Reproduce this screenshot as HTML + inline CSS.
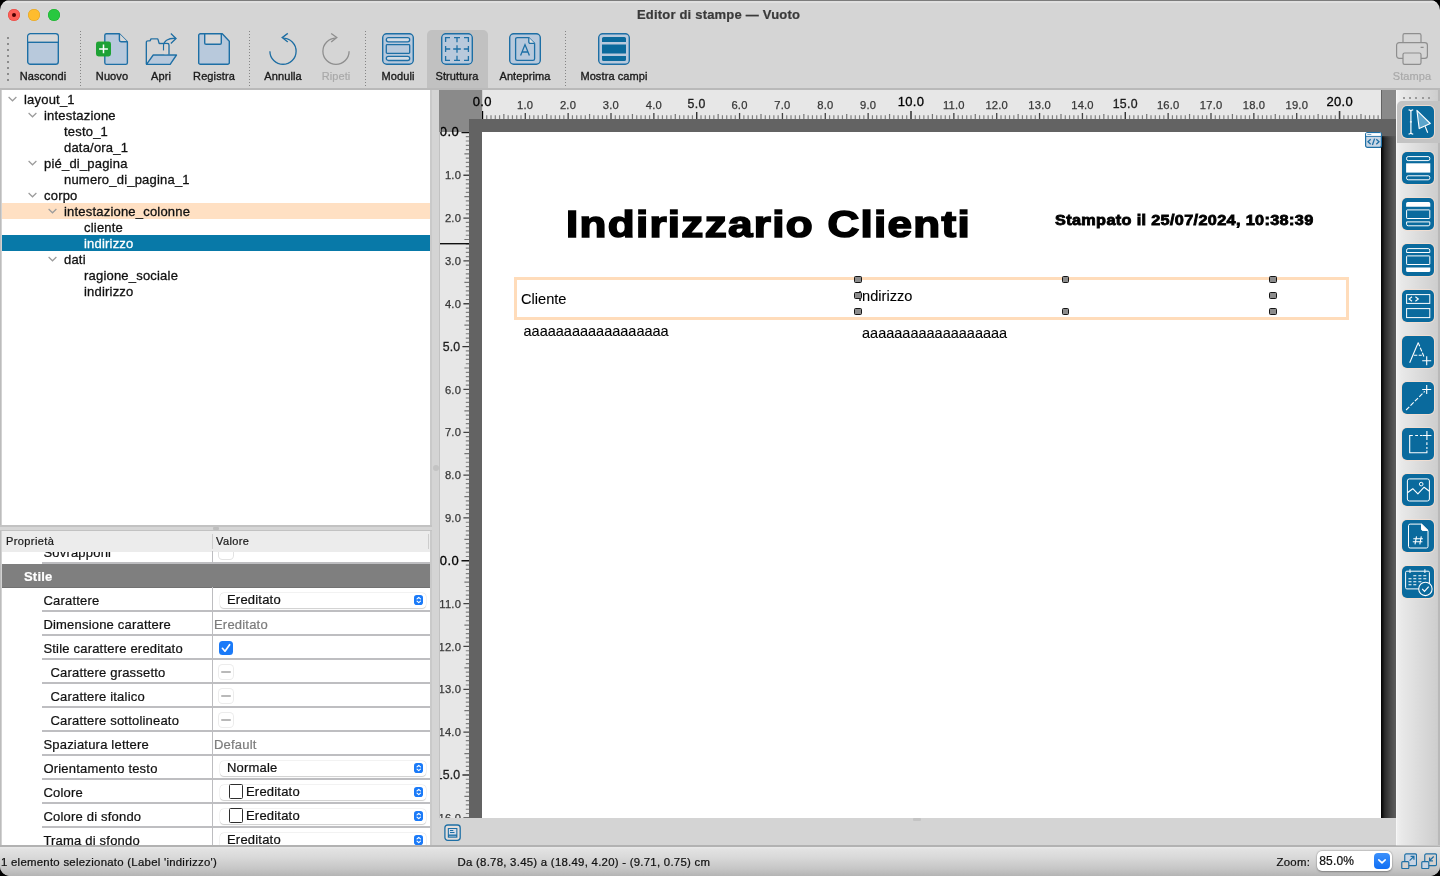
<!DOCTYPE html>
<html lang="it">
<head>
<meta charset="utf-8">
<title>Editor di stampe — Vuoto</title>
<style>
*{box-sizing:border-box;margin:0;padding:0}
html,body{width:1440px;height:876px;overflow:hidden;background:#000}
body{font-family:"Liberation Sans",sans-serif;font-size:13px;color:#1a1a1a;position:relative}
.a{position:absolute}
#win{position:absolute;left:0;top:0;width:1440px;height:876px;background:#d5d5d5;border-radius:10px;overflow:hidden;will-change:transform;-webkit-font-smoothing:antialiased;-webkit-text-stroke-width:.22px}
.t{position:absolute;white-space:nowrap;line-height:16px}
.tl{position:absolute;top:9px;width:12px;height:12px;border-radius:50%}
#title{left:518.500px;width:400px;top:6.800px;text-align:center;font-weight:bold;font-size:13px;color:#3a3a3a;letter-spacing:.2px}
.tbl{position:absolute;top:68.400px;width:100px;margin-left:-50px;text-align:center;font-size:11px;line-height:16px;color:#1a1a1a;white-space:nowrap;letter-spacing:.1px;-webkit-text-stroke-width:.34px}
.tbl.dis{color:#a9a9a9;-webkit-text-stroke-width:.2px}
.ico{position:absolute;top:33px;width:32px;height:32px;overflow:visible;filter:drop-shadow(0 0 .7px rgba(246,224,212,.95)) drop-shadow(0 0 .5px rgba(246,224,212,.8))}
.vsep{position:absolute;top:31px;width:1px;height:55px;background:repeating-linear-gradient(180deg,#858585 0,#858585 1px,transparent 1px,transparent 3px)}
/* tree */
#tree{left:2px;top:90px;width:428px;height:435px;background:#fff}
.tr{position:absolute;left:0;width:428px;height:16px;line-height:16px;font-size:13px;white-space:nowrap;color:#111;letter-spacing:.2px;-webkit-text-stroke-width:.3px}
.tr span{position:absolute;top:.8px}
.chev{position:absolute;top:5px;width:9px;height:6px}
/* props */
#props{left:2px;top:531px;width:428px;height:314px;background:#fff;overflow:hidden}
.pr{position:absolute;left:0;width:428px;height:24px}
.pr .n{position:absolute;top:4.700px;line-height:16px;font-size:13px;white-space:nowrap;color:#111;letter-spacing:.2px;margin-left:-.6px}
.pr .ln{position:absolute;left:40px;right:.5px;bottom:0;height:2px;background:#bebec1}
.pr .v{position:absolute;left:212px;top:4.500px;line-height:16px;font-size:13px;color:#7c7c7c;letter-spacing:.2px}
.cb{position:absolute;left:218px;top:588px;width:205.500px;height:14.500px;background:#fff;border-radius:4px;box-shadow:0 0 0 .5px rgba(0,0,0,.07),0 .5px 1px rgba(0,0,0,.16)}
.cb .x{position:absolute;left:7px;top:-1.300px;line-height:16px;font-size:13px;color:#111;white-space:nowrap;letter-spacing:.2px}
.cb .st{position:absolute;right:2.500px;top:2.200px;width:9.500px;height:10px;border-radius:2.800px;background:#1a7af8}
.sw{position:absolute;left:9px;top:-.7px;width:14px;height:14.400px;border:1.200px solid #2e2e2e;border-radius:1.500px;background:#fff}
.chk{position:absolute;left:217px;width:14px;height:14px;border-radius:3.5px}
/* rulers */
.hl{position:absolute;white-space:nowrap;text-align:center;width:40px;margin-left:-20px}
.hl.A{font-size:13px;color:#000;top:94.200px;line-height:16px;letter-spacing:.3px;-webkit-text-stroke-width:.3px}
.hl.B{font-size:12.300px;color:#1e1e1e;top:95.500px;line-height:16px;letter-spacing:.3px;-webkit-text-stroke-width:.3px}
.hl.C{font-size:11.200px;color:#383838;top:97px;line-height:16px;letter-spacing:.2px;-webkit-text-stroke-width:.25px}
.vl{position:absolute;white-space:nowrap;text-align:right;width:40px;left:420px;line-height:16px}
.vl.A{font-size:13px;color:#000;letter-spacing:.45px;-webkit-text-stroke-width:.3px}
.vl.B{font-size:12.300px;color:#1e1e1e;letter-spacing:.1px;-webkit-text-stroke-width:.3px}
.vl.C{font-size:11.200px;color:#383838;letter-spacing:.25px;-webkit-text-stroke-width:.25px}
.rb{position:absolute;left:1402px;width:32px;height:32px;border-radius:5px;background:#0a6a9d;box-shadow:0 0 0 1px rgba(245,222,208,.85)}
.rb svg{position:absolute;left:0;top:0;width:32px;height:32px;overflow:visible}
.pg{position:absolute;white-space:nowrap;color:#000;-webkit-text-stroke-width:.1px}
.hd{position:absolute;width:7.700px;height:7.400px;margin:.5px 0 0 .1px;background:#8c8c8c;border:1.800px solid #151515;border-radius:1.500px}
</style>
</head>
<body>
<div id="win">
<!-- title bar -->
<div class="a" style="left:0;top:0;width:1440px;height:1px;background:#7c7c7c"></div>
<div class="a" style="left:0;top:1px;width:1440px;height:1.500px;background:#e0e0e0"></div>
<div class="tl" style="left:8px;background:#fe5f57;box-shadow:0 0 0 .5px #e0443e inset"></div>
<div class="a" style="left:12px;top:13px;width:4px;height:4px;border-radius:50%;background:#4d0000"></div>
<div class="tl" style="left:28px;background:#febc2e;box-shadow:0 0 0 .5px #dea123 inset"></div>
<div class="tl" style="left:48px;background:#28c840;box-shadow:0 0 0 .5px #1aab29 inset"></div>
<div class="t" id="title">Editor di stampe — Vuoto</div>

<!-- toolbar grip -->
<div class="a" style="left:7px;top:37px;width:2px;height:45px;background:repeating-linear-gradient(180deg,#8c8c8c 0,#8c8c8c 2px,transparent 2px,transparent 6px)"></div>

<!-- selected bg for Struttura -->
<div class="a" style="left:427px;top:30px;width:61px;height:59px;background:#c1c1c1;border-radius:5px 5px 0 0"></div>

<!-- Nascondi -->
<svg class="ico" style="left:27px" viewBox="0 0 32 32"><rect x=".7" y=".7" width="30.6" height="30.6" rx="2.6" fill="#b8c9dc" stroke="#1d6fa5" stroke-width="1.4"/><path d="M1.4 3.3a1.9 1.9 0 0 1 1.9-1.9h25.4a1.9 1.9 0 0 1 1.9 1.9V9H1.4z" fill="#d8d8d8"/><path d="M.7 9.3h30.6" stroke="#1d6fa5" stroke-width="1.4"/></svg>
<div class="tbl" style="left:43px">Nascondi</div>
<div class="vsep" style="left:80px"></div>

<!-- Nuovo -->
<svg class="ico" style="left:95px" viewBox="0 0 32 32"><path d="M11.4.7h13l8 8v21.1a1.6 1.6 0 0 1-1.6 1.6H11.400a1.600 1.600 0 0 1-1.600-1.600V2.300A1.600 1.600 0 0 1 11.400.7z" fill="#b8c9dc" stroke="#1d6fa5" stroke-width="1.4" stroke-linejoin="round"/><path d="M24.4.7v6.400a1.600 1.600 0 0 0 1.600 1.600h6.400" fill="#d8d8d8" stroke="#1d6fa5" stroke-width="1.4" stroke-linejoin="round"/><rect x="1" y="8.400" width="15" height="15" rx="2.400" fill="#1ea235"/><path d="M8.500 11.500v8.800M4.100 15.900h8.800" stroke="#fff" stroke-width="1.500"/></svg>
<div class="tbl" style="left:112px">Nuovo</div>

<!-- Apri -->
<svg class="ico" style="left:145px" viewBox="0 0 32 32"><path d="M1.300 31V9.400a1.500 1.500 0 0 1 1.500-1.500h2.200l1-2h6.800l1.400 4.600h8.300a1.500 1.500 0 0 1 1.500 1.500v9.600" fill="none" stroke="#1d6fa5" stroke-width="1.400" stroke-linejoin="round"/><path d="M8.200 22h23.300l-6.300 9.400H1.500z" fill="#b8c9dc" stroke="#1d6fa5" stroke-width="1.400" stroke-linejoin="round"/><path d="M18.600 17.500v-4.500c0-5 4-7.800 11.600-7.700" fill="none" stroke="#1d6fa5" stroke-width="1.400"/><path d="M25.800.6l5.200 4.800-5.200 5" fill="none" stroke="#1d6fa5" stroke-width="1.400"/><path d="M19.300 11.200h3.200v10h-3.200z" fill="#d5d5d5"/></svg>
<div class="tbl" style="left:161px">Apri</div>

<!-- Registra -->
<svg class="ico" style="left:198px" viewBox="0 0 32 32"><path d="M2.300.7h22l7 7.600v21.400a1.600 1.600 0 0 1-1.600 1.600H2.300A1.600 1.600 0 0 1 .7 29.700V2.300A1.600 1.600 0 0 1 2.300.7z" fill="#b8c9dc" stroke="#1d6fa5" stroke-width="1.400" stroke-linejoin="round"/><path d="M6.700.7v9.200a1.400 1.400 0 0 0 1.400 1.400h13.800a1.400 1.400 0 0 0 1.400-1.400V.7z" fill="#d8d8d8" stroke="#1d6fa5" stroke-width="1.400" stroke-linejoin="round"/></svg>
<div class="tbl" style="left:214px">Registra</div>
<div class="vsep" style="left:249px"></div>

<!-- Annulla -->
<svg class="ico" style="left:267px" viewBox="0 0 32 32"><path d="M2.900 18.200a13.100 13.100 0 1 0 13.100-13.100" fill="none" stroke="#1d6fa5" stroke-width="1.400"/><path d="M20.800.4l-5.600 4.200 5.600 4.400" fill="none" stroke="#1d6fa5" stroke-width="1.400" stroke-linejoin="miter"/></svg>
<div class="tbl" style="left:283px">Annulla</div>

<!-- Ripeti -->
<svg class="ico" style="left:320px;filter:none" viewBox="0 0 32 32"><path d="M29.100 18.200a13.100 13.100 0 1 1-13.100-13.100" fill="none" stroke="#8e8e8e" stroke-width="1.300"/><path d="M11.200.4l5.600 4.200-5.600 4.400" fill="none" stroke="#8e8e8e" stroke-width="1.300"/></svg>
<div class="tbl dis" style="left:336px">Ripeti</div>
<div class="vsep" style="left:365px"></div>

<!-- Moduli -->
<svg class="ico" style="left:382px" viewBox="0 0 32 32"><rect x=".7" y=".7" width="30.600" height="30.600" rx="4" fill="#b8c9dc" stroke="#1d6fa5" stroke-width="1.400"/><rect x="4.300" y="4.600" width="23.400" height="4.200" rx="2.100" fill="#d3dbe4" stroke="#1d6fa5" stroke-width="1.300"/><rect x="4.300" y="11.600" width="23.400" height="8.800" rx=".8" fill="#b8c9dc" stroke="#1d6fa5" stroke-width="1.300"/><rect x="4.300" y="23.300" width="23.400" height="4.200" rx="2.100" fill="#d3dbe4" stroke="#1d6fa5" stroke-width="1.300"/></svg>
<div class="tbl" style="left:398px">Moduli</div>

<!-- Struttura -->
<svg class="ico" style="left:441px" viewBox="0 0 32 32"><rect x=".7" y=".7" width="30.600" height="30.600" rx="4" fill="#b8c9dc" stroke="#1d6fa5" stroke-width="1.400"/><path d="M4.600 9V4.600H9M13 4.600h6M23 4.600h4.400V9M27.400 13v6M27.400 23v4.400H23M19 27.400h-6M9 27.400H4.600V23M4.600 19v-6M16 4.600v4.600M16 27.400v-4.600M4.600 16h4.600M27.400 16h-4.600M16 12.200v7.600M12.200 16h7.600" fill="none" stroke="#1d6fa5" stroke-width="1.300"/></svg>
<div class="tbl" style="left:457px">Struttura</div>

<!-- Anteprima -->
<svg class="ico" style="left:509px" viewBox="0 0 32 32"><rect x=".7" y=".7" width="30.600" height="30.600" rx="4" fill="#b8c9dc" stroke="#1d6fa5" stroke-width="1.400"/><path d="M8.200 4.600h11.600l5.800 5.800v15.400a1.600 1.600 0 0 1-1.600 1.600H8.200a1.600 1.600 0 0 1-1.600-1.600V6.200a1.600 1.600 0 0 1 1.600-1.600z" fill="#b8c9dc" stroke="#1d6fa5" stroke-width="1.300" stroke-linejoin="round"/><path d="M19.800 4.600v4.400a1.400 1.400 0 0 0 1.400 1.400h4.400" fill="#e4e4e4" stroke="#1d6fa5" stroke-width="1.300" stroke-linejoin="round"/><path d="M11.600 22.400l4.400-10.800 4.400 10.800M13 19h6" fill="none" stroke="#1d6fa5" stroke-width="1.300"/></svg>
<div class="tbl" style="left:525px">Anteprima</div>
<div class="vsep" style="left:565px"></div>

<!-- Mostra campi -->
<svg class="ico" style="left:598px" viewBox="0 0 32 32"><rect x=".7" y=".7" width="30.600" height="30.600" rx="4" fill="#b8c9dc" stroke="#1d6fa5" stroke-width="1.400"/><path d="M5.600 4h20.800a1.600 1.600 0 0 1 1.600 1.600V9H4V5.600A1.600 1.600 0 0 1 5.600 4zM4 11.600h24v8.800H4zM4 23h24v3.400a1.600 1.600 0 0 1-1.600 1.600H5.600A1.600 1.600 0 0 1 4 26.400z" fill="#0b6a9c"/></svg>
<div class="tbl" style="left:614px">Mostra campi</div>

<!-- Stampa -->
<svg class="ico" style="left:1396px;filter:none" viewBox="0 0 32 32"><path d="M7 9.600V2.200A1.600 1.600 0 0 1 8.600.6h14.800A1.600 1.600 0 0 1 25 2.200v7.400" fill="none" stroke="#8e8e8e" stroke-width="1.200"/><path d="M7 25.400H3.200a2.600 2.600 0 0 1-2.600-2.600V12.200a2.600 2.600 0 0 1 2.600-2.600h25.600a2.600 2.600 0 0 1 2.600 2.600v10.600a2.600 2.600 0 0 1-2.600 2.600H25" fill="none" stroke="#8e8e8e" stroke-width="1.200"/><path d="M8.600 20h14.800a1.600 1.600 0 0 1 1.600 1.600v8.200a1.600 1.600 0 0 1-1.600 1.600H8.600A1.600 1.600 0 0 1 7 29.800v-8.200A1.600 1.600 0 0 1 8.600 20zM24.600 14.400h3" fill="none" stroke="#8e8e8e" stroke-width="1.200"/></svg>
<div class="tbl dis" style="left:1412px">Stampa</div>

<!-- toolbar bottom line -->
<div class="a" style="left:0;top:88px;width:1440px;height:2px;background:#b9b9b9"></div>
<!-- left edge line -->
<div class="a" style="left:0;top:90px;width:2px;height:756px;background:linear-gradient(90deg,#bcbcbc 0,#bcbcbc 70%,#d2d2d2 70%)"></div>
<div class="a" id="tree">
<div class="tr" style="top:1px;"><svg class="chev" style="left:5.5px" viewBox="0 0 9 6"><path d="M.6 1l3.900 3.800L8.400 1" fill="none" stroke="#9b9b9b" stroke-width="1.200"/></svg><span style="left:22px;">layout_1</span></div>
<div class="tr" style="top:17px;"><svg class="chev" style="left:25.5px" viewBox="0 0 9 6"><path d="M.6 1l3.900 3.800L8.400 1" fill="none" stroke="#9b9b9b" stroke-width="1.200"/></svg><span style="left:42px;">intestazione</span></div>
<div class="tr" style="top:33px;"><span style="left:62px;">testo_1</span></div>
<div class="tr" style="top:49px;"><span style="left:62px;">data/ora_1</span></div>
<div class="tr" style="top:65px;"><svg class="chev" style="left:25.5px" viewBox="0 0 9 6"><path d="M.6 1l3.900 3.800L8.400 1" fill="none" stroke="#9b9b9b" stroke-width="1.200"/></svg><span style="left:42px;">pié_di_pagina</span></div>
<div class="tr" style="top:81px;"><span style="left:62px;">numero_di_pagina_1</span></div>
<div class="tr" style="top:97px;"><svg class="chev" style="left:25.5px" viewBox="0 0 9 6"><path d="M.6 1l3.900 3.800L8.400 1" fill="none" stroke="#9b9b9b" stroke-width="1.200"/></svg><span style="left:42px;">corpo</span></div>
<div class="tr" style="top:113px;background:#ffe0c3;"><svg class="chev" style="left:45.5px" viewBox="0 0 9 6"><path d="M.6 1l3.900 3.800L8.400 1" fill="none" stroke="#9b9b9b" stroke-width="1.200"/></svg><span style="left:62px;">intestazione_colonne</span></div>
<div class="tr" style="top:129px;"><span style="left:82px;">cliente</span></div>
<div class="tr" style="top:145px;background:#0879a8;"><span style="left:82px;color:#fff;">indirizzo</span></div>
<div class="tr" style="top:161px;"><svg class="chev" style="left:45.5px" viewBox="0 0 9 6"><path d="M.6 1l3.900 3.800L8.400 1" fill="none" stroke="#9b9b9b" stroke-width="1.200"/></svg><span style="left:62px;">dati</span></div>
<div class="tr" style="top:177px;"><span style="left:82px;">ragione_sociale</span></div>
<div class="tr" style="top:193px;"><span style="left:82px;">indirizzo</span></div>
</div>
<!-- tree right edge -->
<div class="a" style="left:430px;top:90px;width:2px;height:756px;background:#c9c9c9"></div>
<!-- horizontal splitter -->
<div class="a" style="left:0;top:525px;width:432px;height:6px;background:#d6d6d6;border-top:2px solid #c2c2c2;border-bottom:1.5px solid #c2c2c2"></div>
<div class="a" style="left:213px;top:527px;width:6px;height:3px;background:#bdbdbd;border-radius:1px"></div>
<div class="a" id="props">
<div class="pr" style="top:9px"><span class="n" style="left:42px">Sovrapponi</span><div class="chk" style="top:5px;background:#fff;box-shadow:0 0 0 1px #e2e2e2"></div><div class="ln"></div></div>
<div class="a" style="left:0;top:0;width:428px;height:20.500px;background:#ececec"></div>
<div class="t" style="left:4px;top:2px;font-size:11px;color:#1a1a1a;letter-spacing:.4px">Proprietà</div>
<div class="t" style="left:214px;top:2px;font-size:11px;color:#1a1a1a;letter-spacing:.4px">Valore</div>
<div class="a" style="left:209.500px;top:3px;width:1px;height:15px;background:#cdcdcd"></div>
<div class="a" style="left:426px;top:3px;width:1px;height:15px;background:#cdcdcd"></div>
<div class="a" style="left:0;top:33px;width:428px;height:24px;background:#7f7f7f;border-bottom:1.500px solid #727272"></div>
<div class="t" style="left:22px;top:37.5px;font-size:13px;font-weight:bold;color:#fff;letter-spacing:.2px">Stile</div>
<div class="pr" style="top:57px"><span class="n" style="left:42px">Carattere</span><div class="cb" style="top:5px"><span class="x">Ereditato</span><svg class="st" viewBox="0 0 10 11" style="background:#1a7af8"><path d="M3.100 4.300L5 2.500l1.900 1.800M3.100 6.700L5 8.500l1.900-1.800" fill="none" stroke="#fff" stroke-width="1.200" stroke-linecap="round" stroke-linejoin="round"/></svg></div><div class="ln"></div></div>
<div class="pr" style="top:81px"><span class="n" style="left:42px">Dimensione carattere</span><span class="v">Ereditato</span><div class="ln"></div></div>
<div class="pr" style="top:105px"><span class="n" style="left:42px">Stile carattere ereditato</span><svg class="chk" style="top:5px;background:#1a7af8" viewBox="0 0 14 14"><path d="M3.400 7.300l2.600 2.900 4.600-6.500" fill="none" stroke="#fff" stroke-width="1.700" stroke-linecap="round" stroke-linejoin="round"/></svg><div class="ln"></div></div>
<div class="pr" style="top:129px"><span class="n" style="left:49px">Carattere grassetto</span><div class="chk" style="top:5px;background:#fff;box-shadow:0 0 0 1px #ececec"><div class="a" style="left:2.300px;top:5.900px;width:9.400px;height:2.200px;border-radius:1px;background:#b9b9b9"></div></div><div class="ln"></div></div>
<div class="pr" style="top:153px"><span class="n" style="left:49px">Carattere italico</span><div class="chk" style="top:5px;background:#fff;box-shadow:0 0 0 1px #ececec"><div class="a" style="left:2.300px;top:5.900px;width:9.400px;height:2.200px;border-radius:1px;background:#b9b9b9"></div></div><div class="ln"></div></div>
<div class="pr" style="top:177px"><span class="n" style="left:49px">Carattere sottolineato</span><div class="chk" style="top:5px;background:#fff;box-shadow:0 0 0 1px #ececec"><div class="a" style="left:2.300px;top:5.900px;width:9.400px;height:2.200px;border-radius:1px;background:#b9b9b9"></div></div><div class="ln"></div></div>
<div class="pr" style="top:201px"><span class="n" style="left:42px">Spaziatura lettere</span><span class="v">Default</span><div class="ln"></div></div>
<div class="pr" style="top:225px"><span class="n" style="left:42px">Orientamento testo</span><div class="cb" style="top:5px"><span class="x">Normale</span><svg class="st" viewBox="0 0 10 11" style="background:#1a7af8"><path d="M3.100 4.300L5 2.500l1.900 1.800M3.100 6.700L5 8.500l1.900-1.800" fill="none" stroke="#fff" stroke-width="1.200" stroke-linecap="round" stroke-linejoin="round"/></svg></div><div class="ln"></div></div>
<div class="pr" style="top:249px"><span class="n" style="left:42px">Colore</span><div class="cb" style="top:5px"><div class="sw"></div><span class="x" style="left:26px">Ereditato</span><svg class="st" viewBox="0 0 10 11" style="background:#1a7af8"><path d="M3.100 4.300L5 2.500l1.900 1.800M3.100 6.700L5 8.500l1.900-1.800" fill="none" stroke="#fff" stroke-width="1.200" stroke-linecap="round" stroke-linejoin="round"/></svg></div><div class="ln"></div></div>
<div class="pr" style="top:273px"><span class="n" style="left:42px">Colore di sfondo</span><div class="cb" style="top:5px"><div class="sw"></div><span class="x" style="left:26px">Ereditato</span><svg class="st" viewBox="0 0 10 11" style="background:#1a7af8"><path d="M3.100 4.300L5 2.500l1.900 1.800M3.100 6.700L5 8.500l1.900-1.800" fill="none" stroke="#fff" stroke-width="1.200" stroke-linecap="round" stroke-linejoin="round"/></svg></div><div class="ln"></div></div>
<div class="pr" style="top:297px"><span class="n" style="left:42px">Trama di sfondo</span><div class="cb" style="top:5px"><span class="x">Ereditato</span><svg class="st" viewBox="0 0 10 11" style="background:#1a7af8"><path d="M3.100 4.300L5 2.500l1.900 1.800M3.100 6.700L5 8.500l1.900-1.800" fill="none" stroke="#fff" stroke-width="1.200" stroke-linecap="round" stroke-linejoin="round"/></svg></div><div class="ln"></div></div>
<div class="a" style="left:209.500px;top:20px;width:1.500px;height:300px;background:#bdbdc0"></div>
<div class="a" style="left:200px;top:33px;width:228px;height:22.500px;background:#7f7f7f"></div>
</div>
<!-- vertical splitter -->
<div class="a" style="left:432px;top:90px;width:8.200px;height:756px;background:#d4d4d4"></div>
<div class="a" style="left:432.500px;top:464.500px;width:6px;height:6px;background:#c3c3c3;border-radius:50%"></div>
<!-- canvas -->
<div class="a" style="left:440.200px;top:90px;width:955.800px;height:728px;background:#636363"></div>
<div class="a" style="left:440.200px;top:90px;width:41.800px;height:29.400px;background:#8a8a8a"></div>
<div class="a" style="left:440.200px;top:119px;width:29.100px;height:13px;background:#8a8a8a"></div>
<div class="a" style="left:1381.500px;top:90px;width:14.500px;height:29.400px;background:#8a8a8a"></div>
<svg class="a" style="left:482.0px;top:90px;width:899.2px;height:29.4px" viewBox="0 0 899.2 29.4"><rect width="899.2" height="29.4" fill="#e7e7e7"/><path d="M4.59 29.4v-4.2M8.87 29.4v-4.2M13.16 29.4v-4.2M17.45 29.4v-4.2M26.02 29.4v-4.2M30.31 29.4v-4.2M34.60 29.4v-4.2M38.88 29.4v-4.2M47.46 29.4v-4.2M51.74 29.4v-4.2M56.03 29.4v-4.2M60.32 29.4v-4.2M68.89 29.4v-4.2M73.18 29.4v-4.2M77.47 29.4v-4.2M81.75 29.4v-4.2M90.33 29.4v-4.2M94.61 29.4v-4.2M98.90 29.4v-4.2M103.19 29.4v-4.2M111.76 29.4v-4.2M116.05 29.4v-4.2M120.34 29.4v-4.2M124.62 29.4v-4.2M133.20 29.4v-4.2M137.48 29.4v-4.2M141.77 29.4v-4.2M146.06 29.4v-4.2M154.63 29.4v-4.2M158.92 29.4v-4.2M163.21 29.4v-4.2M167.49 29.4v-4.2M176.07 29.4v-4.2M180.35 29.4v-4.2M184.64 29.4v-4.2M188.93 29.4v-4.2M197.50 29.4v-4.2M201.79 29.4v-4.2M206.08 29.4v-4.2M210.36 29.4v-4.2M218.94 29.4v-4.2M223.22 29.4v-4.2M227.51 29.4v-4.2M231.80 29.4v-4.2M240.37 29.4v-4.2M244.66 29.4v-4.2M248.95 29.4v-4.2M253.23 29.4v-4.2M261.81 29.4v-4.2M266.09 29.4v-4.2M270.38 29.4v-4.2M274.67 29.4v-4.2M283.24 29.4v-4.2M287.53 29.4v-4.2M291.82 29.4v-4.2M296.10 29.4v-4.2M304.68 29.4v-4.2M308.96 29.4v-4.2M313.25 29.4v-4.2M317.54 29.4v-4.2M326.11 29.4v-4.2M330.40 29.4v-4.2M334.69 29.4v-4.2M338.97 29.4v-4.2M347.55 29.4v-4.2M351.83 29.4v-4.2M356.12 29.4v-4.2M360.41 29.4v-4.2M368.98 29.4v-4.2M373.27 29.4v-4.2M377.56 29.4v-4.2M381.84 29.4v-4.2M390.42 29.4v-4.2M394.70 29.4v-4.2M398.99 29.4v-4.2M403.28 29.4v-4.2M411.85 29.4v-4.2M416.14 29.4v-4.2M420.43 29.4v-4.2M424.71 29.4v-4.2M433.29 29.4v-4.2M437.57 29.4v-4.2M441.86 29.4v-4.2M446.15 29.4v-4.2M454.72 29.4v-4.2M459.01 29.4v-4.2M463.30 29.4v-4.2M467.58 29.4v-4.2M476.16 29.4v-4.2M480.44 29.4v-4.2M484.73 29.4v-4.2M489.02 29.4v-4.2M497.59 29.4v-4.2M501.88 29.4v-4.2M506.17 29.4v-4.2M510.45 29.4v-4.2M519.03 29.4v-4.2M523.31 29.4v-4.2M527.60 29.4v-4.2M531.89 29.4v-4.2M540.46 29.4v-4.2M544.75 29.4v-4.2M549.04 29.4v-4.2M553.32 29.4v-4.2M561.90 29.4v-4.2M566.18 29.4v-4.2M570.47 29.4v-4.2M574.76 29.4v-4.2M583.33 29.4v-4.2M587.62 29.4v-4.2M591.91 29.4v-4.2M596.19 29.4v-4.2M604.77 29.4v-4.2M609.05 29.4v-4.2M613.34 29.4v-4.2M617.63 29.4v-4.2M626.20 29.4v-4.2M630.49 29.4v-4.2M634.78 29.4v-4.2M639.06 29.4v-4.2M647.64 29.4v-4.2M651.92 29.4v-4.2M656.21 29.4v-4.2M660.50 29.4v-4.2M669.07 29.4v-4.2M673.36 29.4v-4.2M677.65 29.4v-4.2M681.93 29.4v-4.2M690.51 29.4v-4.2M694.79 29.4v-4.2M699.08 29.4v-4.2M703.37 29.4v-4.2M711.94 29.4v-4.2M716.23 29.4v-4.2M720.52 29.4v-4.2M724.80 29.4v-4.2M733.38 29.4v-4.2M737.66 29.4v-4.2M741.95 29.4v-4.2M746.24 29.4v-4.2M754.81 29.4v-4.2M759.10 29.4v-4.2M763.39 29.4v-4.2M767.67 29.4v-4.2M776.25 29.4v-4.2M780.53 29.4v-4.2M784.82 29.4v-4.2M789.11 29.4v-4.2M797.68 29.4v-4.2M801.97 29.4v-4.2M806.26 29.4v-4.2M810.54 29.4v-4.2M819.12 29.4v-4.2M823.40 29.4v-4.2M827.69 29.4v-4.2M831.98 29.4v-4.2M840.55 29.4v-4.2M844.84 29.4v-4.2M849.13 29.4v-4.2M853.41 29.4v-4.2M861.99 29.4v-4.2M866.27 29.4v-4.2M870.56 29.4v-4.2M874.85 29.4v-4.2M883.42 29.4v-4.2M887.71 29.4v-4.2M892.00 29.4v-4.2M896.28 29.4v-4.2" stroke="#808080" stroke-width="1.2"/><path d="M21.73 29.4v-5.5M64.60 29.4v-5.5M107.47 29.4v-5.5M150.34 29.4v-5.5M193.22 29.4v-5.5M236.09 29.4v-5.5M278.95 29.4v-5.5M321.82 29.4v-5.5M364.69 29.4v-5.5M407.56 29.4v-5.5M450.43 29.4v-5.5M493.30 29.4v-5.5M536.17 29.4v-5.5M579.04 29.4v-5.5M621.91 29.4v-5.5M664.78 29.4v-5.5M707.65 29.4v-5.5M750.52 29.4v-5.5M793.39 29.4v-5.5M836.26 29.4v-5.5M879.13 29.4v-5.5" stroke="#747474" stroke-width="1.2"/><path d="M43.17 29.4v-6.4M86.04 29.4v-6.4M128.91 29.4v-6.4M171.78 29.4v-6.4M257.52 29.4v-6.4M300.39 29.4v-6.4M343.26 29.4v-6.4M386.13 29.4v-6.4M471.87 29.4v-6.4M514.74 29.4v-6.4M557.61 29.4v-6.4M600.48 29.4v-6.4M686.22 29.4v-6.4M729.09 29.4v-6.4M771.96 29.4v-6.4M814.83 29.4v-6.4M900.57 29.4v-6.4" stroke="#444" stroke-width="1.3"/><path d="M214.65 29.4v-7.4M643.35 29.4v-7.4" stroke="#333" stroke-width="1.4"/><path d="M429.00 29.4v-8.3M857.70 29.4v-8.3" stroke="#3a3a3a" stroke-width="1.6"/><path d="M0.30 29.4v-8.3" stroke="#000" stroke-width="1.5"/></svg>
<div class="hl A" style="left:482.3px">0.0</div>
<div class="hl C" style="left:525.2px">1.0</div>
<div class="hl C" style="left:568.0px">2.0</div>
<div class="hl C" style="left:610.9px">3.0</div>
<div class="hl C" style="left:653.8px">4.0</div>
<div class="hl B" style="left:696.6px">5.0</div>
<div class="hl C" style="left:739.5px">6.0</div>
<div class="hl C" style="left:782.4px">7.0</div>
<div class="hl C" style="left:825.3px">8.0</div>
<div class="hl C" style="left:868.1px">9.0</div>
<div class="hl A" style="left:911.0px">10.0</div>
<div class="hl C" style="left:953.9px">11.0</div>
<div class="hl C" style="left:996.7px">12.0</div>
<div class="hl C" style="left:1039.6px">13.0</div>
<div class="hl C" style="left:1082.5px">14.0</div>
<div class="hl B" style="left:1125.3px">15.0</div>
<div class="hl C" style="left:1168.2px">16.0</div>
<div class="hl C" style="left:1211.1px">17.0</div>
<div class="hl C" style="left:1254.0px">18.0</div>
<div class="hl C" style="left:1296.8px">19.0</div>
<div class="hl A" style="left:1339.7px">20.0</div>
<div class="a" style="left:439.500px;top:131.8px;width:29.800px;height:686.2px;background:#e7e7e7;overflow:hidden"><svg class="a" style="left:0;top:0;width:29.800px;height:686.2px" viewBox="0 0 29.800 686.2"><path d="M29.800 4.68h-4.0M29.800 8.97h-4.0M29.800 13.25h-4.0M29.800 17.54h-4.0M29.800 26.10h-4.0M29.800 30.39h-4.0M29.800 34.67h-4.0M29.800 38.96h-4.0M29.800 47.52h-4.0M29.800 51.81h-4.0M29.800 56.09h-4.0M29.800 60.38h-4.0M29.800 68.94h-4.0M29.800 73.23h-4.0M29.800 77.51h-4.0M29.800 81.80h-4.0M29.800 90.36h-4.0M29.800 94.65h-4.0M29.800 98.93h-4.0M29.800 103.22h-4.0M29.800 111.78h-4.0M29.800 116.07h-4.0M29.800 120.35h-4.0M29.800 124.64h-4.0M29.800 133.20h-4.0M29.800 137.49h-4.0M29.800 141.77h-4.0M29.800 146.06h-4.0M29.800 154.62h-4.0M29.800 158.91h-4.0M29.800 163.19h-4.0M29.800 167.48h-4.0M29.800 176.04h-4.0M29.800 180.33h-4.0M29.800 184.61h-4.0M29.800 188.90h-4.0M29.800 197.46h-4.0M29.800 201.75h-4.0M29.800 206.03h-4.0M29.800 210.32h-4.0M29.800 218.88h-4.0M29.800 223.17h-4.0M29.800 227.45h-4.0M29.800 231.74h-4.0M29.800 240.30h-4.0M29.800 244.59h-4.0M29.800 248.87h-4.0M29.800 253.16h-4.0M29.800 261.72h-4.0M29.800 266.01h-4.0M29.800 270.29h-4.0M29.800 274.58h-4.0M29.800 283.14h-4.0M29.800 287.43h-4.0M29.800 291.71h-4.0M29.800 296.00h-4.0M29.800 304.56h-4.0M29.800 308.85h-4.0M29.800 313.13h-4.0M29.800 317.42h-4.0M29.800 325.98h-4.0M29.800 330.27h-4.0M29.800 334.55h-4.0M29.800 338.84h-4.0M29.800 347.40h-4.0M29.800 351.69h-4.0M29.800 355.97h-4.0M29.800 360.26h-4.0M29.800 368.82h-4.0M29.800 373.11h-4.0M29.800 377.39h-4.0M29.800 381.68h-4.0M29.800 390.24h-4.0M29.800 394.53h-4.0M29.800 398.81h-4.0M29.800 403.10h-4.0M29.800 411.66h-4.0M29.800 415.95h-4.0M29.800 420.23h-4.0M29.800 424.52h-4.0M29.800 433.08h-4.0M29.800 437.37h-4.0M29.800 441.65h-4.0M29.800 445.94h-4.0M29.800 454.50h-4.0M29.800 458.79h-4.0M29.800 463.07h-4.0M29.800 467.36h-4.0M29.800 475.92h-4.0M29.800 480.21h-4.0M29.800 484.49h-4.0M29.800 488.78h-4.0M29.800 497.34h-4.0M29.800 501.63h-4.0M29.800 505.91h-4.0M29.800 510.20h-4.0M29.800 518.76h-4.0M29.800 523.05h-4.0M29.800 527.33h-4.0M29.800 531.62h-4.0M29.800 540.18h-4.0M29.800 544.47h-4.0M29.800 548.75h-4.0M29.800 553.04h-4.0M29.800 561.60h-4.0M29.800 565.89h-4.0M29.800 570.17h-4.0M29.800 574.46h-4.0M29.800 583.02h-4.0M29.800 587.31h-4.0M29.800 591.59h-4.0M29.800 595.88h-4.0M29.800 604.44h-4.0M29.800 608.73h-4.0M29.800 613.01h-4.0M29.800 617.30h-4.0M29.800 625.86h-4.0M29.800 630.15h-4.0M29.800 634.43h-4.0M29.800 638.72h-4.0M29.800 647.28h-4.0M29.800 651.57h-4.0M29.800 655.85h-4.0M29.800 660.14h-4.0M29.800 668.70h-4.0M29.800 672.99h-4.0M29.800 677.27h-4.0M29.800 681.56h-4.0" stroke="#808080" stroke-width="1.2"/><path d="M29.800 21.82h-5.4M29.800 64.66h-5.4M29.800 107.50h-5.4M29.800 150.34h-5.4M29.800 193.18h-5.4M29.800 236.02h-5.4M29.800 278.86h-5.4M29.800 321.70h-5.4M29.800 364.54h-5.4M29.800 407.38h-5.4M29.800 450.22h-5.4M29.800 493.06h-5.4M29.800 535.90h-5.4M29.800 578.74h-5.4M29.800 621.58h-5.4M29.800 664.42h-5.4" stroke="#747474" stroke-width="1.2"/><path d="M29.800 43.24h-6.4M29.800 86.08h-6.4M29.800 128.92h-6.4M29.800 171.76h-6.4M29.800 257.44h-6.4M29.800 300.28h-6.4M29.800 343.12h-6.4M29.800 385.96h-6.4M29.800 471.64h-6.4M29.800 514.48h-6.4M29.800 557.32h-6.4M29.800 600.16h-6.4M29.800 685.84h-6.4" stroke="#444" stroke-width="1.3"/><path d="M29.800 214.60h-7.4M29.800 643.00h-7.4" stroke="#333" stroke-width="1.4"/><path d="M29.800 0.40h-8.3M29.800 428.80h-8.3" stroke="#111" stroke-width="1.5"/><path d="M0 111.700h29.800" stroke="#000" stroke-width="1.300"/></svg></div>
<div class="a" style="left:439.500px;top:119.400px;width:29.800px;height:698.600px;overflow:hidden">
<div class="vl A" style="left:-20.3px;top:5.1px">0.0</div>
<div class="vl C" style="left:-18.3px;top:48.0px">1.0</div>
<div class="vl C" style="left:-18.3px;top:90.8px">2.0</div>
<div class="vl C" style="left:-18.3px;top:133.7px">3.0</div>
<div class="vl C" style="left:-18.3px;top:176.5px">4.0</div>
<div class="vl B" style="left:-19.4px;top:219.3px">5.0</div>
<div class="vl C" style="left:-18.3px;top:262.2px">6.0</div>
<div class="vl C" style="left:-18.3px;top:305.0px">7.0</div>
<div class="vl C" style="left:-18.3px;top:347.9px">8.0</div>
<div class="vl C" style="left:-18.3px;top:390.7px">9.0</div>
<div class="vl A" style="left:-20.3px;top:433.5px">10.0</div>
<div class="vl C" style="left:-18.3px;top:476.4px">11.0</div>
<div class="vl C" style="left:-18.3px;top:519.2px">12.0</div>
<div class="vl C" style="left:-18.3px;top:562.1px">13.0</div>
<div class="vl C" style="left:-18.3px;top:604.9px">14.0</div>
<div class="vl B" style="left:-19.4px;top:647.7px">15.0</div>
<div class="vl C" style="left:-18.3px;top:690.6px">16.0</div>
</div>
<div class="a" style="left:439.300px;top:90px;width:.9px;height:728px;background:#c2c2c2"></div>
<div class="a" style="left:439.300px;top:90px;width:2px;height:42px;background:#8a8a8a"></div>
<div class="a" style="left:482px;top:131.500px;width:899.400px;height:686.500px;background:#fff"></div>
<div class="a" style="left:1381.400px;top:136px;width:14.600px;height:682px;background:linear-gradient(90deg,#000 0,#0c0c0c 8%,#2a2a2a 25%,#4a4a4a 65%,#5e5e5e 100%)"></div>
<div class="a" style="left:1381.400px;top:131.500px;width:14.600px;height:6px;background:linear-gradient(180deg,#636363 0,rgba(99,99,99,0) 100%)"></div>
<div class="a" style="left:440px;top:818px;width:956px;height:28px;background:#d4d4d4"></div>
<div class="a" style="left:913px;top:818px;width:8px;height:3px;background:#c4c4c4;border-radius:1px"></div>
<!-- page content -->
<div class="pg" id="ptitle" style="left:566px;top:200px;font-size:37.300px;line-height:48px;font-weight:bold;letter-spacing:1.100px;-webkit-text-stroke:1.600px #000;transform:scaleX(1.18);transform-origin:0 50%">Indirizzario Clienti</div>
<div class="pg" id="pstamp" style="left:1054.500px;top:210.200px;font-size:14.400px;line-height:20px;font-weight:bold;letter-spacing:.3px;-webkit-text-stroke:.8px #000;transform:scaleX(1.13);transform-origin:0 50%">Stampato il 25/07/2024, 10:38:39</div>
<div class="a" style="left:514px;top:277.300px;width:835.200px;height:42.500px;border:3px solid #ffdcba"></div>
<div class="pg" id="pcli" style="left:521px;top:290px;font-size:14.600px;line-height:18px">Cliente</div>
<div class="pg" id="pind" style="left:858px;top:286.500px;font-size:14.600px;line-height:18px">Indirizzo</div>
<div class="pg" id="pa1" style="left:523.500px;top:322px;font-size:14.500px;line-height:18px">aaaaaaaaaaaaaaaaaa</div>
<div class="pg" id="pa2" style="left:862px;top:323.500px;font-size:14.500px;line-height:18px">aaaaaaaaaaaaaaaaaa</div>
<div class="hd" style="left:854px;top:275.500px"></div>
<div class="hd" style="left:854px;top:291.500px"></div>
<div class="hd" style="left:854px;top:307.500px"></div>
<div class="hd" style="left:1061.500px;top:275.500px"></div>
<div class="hd" style="left:1061.500px;top:307.500px"></div>
<div class="hd" style="left:1269.300px;top:275.500px"></div>
<div class="hd" style="left:1269.300px;top:291.500px"></div>
<div class="hd" style="left:1269.300px;top:307.500px"></div>
<!-- html icon on page corner -->
<svg class="a" style="left:1365px;top:132px;width:17px;height:16px" viewBox="0 0 17 16"><rect x=".6" y=".6" width="15.800" height="14.800" rx="2" fill="#c9d6e4" stroke="#1d6fa5" stroke-width="1.200"/><path d="M.6 4.300h15.800" stroke="#1d6fa5" stroke-width="1"/><rect x="1.200" y="1.200" width="14.600" height="2.600" fill="#fff"/><path d="M2.300 2.500h4" stroke="#7ba5c6" stroke-width="1"/><path d="M5.700 7.300L3 9.800l2.700 2.500M11.300 7.300L14 9.800l-2.700 2.500M9.600 6.600l-2.200 6.400" fill="none" stroke="#1d6fa5" stroke-width="1.300"/></svg>
<!-- bottom-left small icon -->
<svg class="a" style="left:443.500px;top:824.200px;width:17px;height:17px" viewBox="0 0 17 17"><rect x=".9" y="1" width="15.300" height="15.300" rx="2.800" fill="#e4dedb" stroke="#1d6fa5" stroke-width="1.300"/><rect x="3.800" y="4" width="9.600" height="9.700" fill="#1d6fa5"/><rect x="4.900" y="5" width="7.400" height="5.500" fill="#d5ddea"/><path d="M6 6.500h3.300M6 8.500h4.500" stroke="#1d6fa5" stroke-width="1"/><path d="M5 12.300h7.200" stroke="#a9c3da" stroke-width=".8"/></svg>
<!-- right toolbar -->
<div class="a" style="left:1396px;top:90px;width:44px;height:756px;background:linear-gradient(90deg,#fbfbfb 0,#efefef 3%,#e9e9e9 12%,#dcdcdc 50%,#cecece 94%,#c9c9c9 95.500%,#b9b9b9 96%,#b9b9b9 100%)"></div>
<div class="a" style="left:1403px;top:97px;width:27px;height:2px;background:repeating-linear-gradient(90deg,#9a9a9a 0,#9a9a9a 2px,transparent 2px,transparent 6.200px)"></div>
<div class="a" style="left:1397px;top:101px;width:43px;height:41.500px;background:#c3c3c3;border-radius:5px 0 0 0"></div>
<div class="rb" style="top:106px"><svg viewBox="0 0 32 32"><path d="M8.900 4.600v22.800M6.600 3.900q2.300.2 2.300 1.700q0-1.500 2.300-1.700M6.600 28.100q2.300-.2 2.300-1.700q0 1.500 2.300 1.700M7.900 15.900h2" fill="none" stroke="#fff" stroke-width="1.200"/><path d="M14.900 4.300l2.300 18.300 11.100-5.100z" fill="#5ba4cb" stroke="#fff" stroke-width="1.100" stroke-linejoin="round"/><path d="M23.100 20.200l2.600 6.600" stroke="#fff" stroke-width="1.100"/></svg></div>
<div class="rb" style="top:152px"><svg viewBox="0 0 32 32"><rect x="4.600" y="4.600" width="23.200" height="4" rx="1.600" fill="none" stroke="#fff" stroke-width="1"/><rect x="4.100" y="11.300" width="24.200" height="9.300" fill="#fff"/><rect x="4.600" y="23.800" width="23.200" height="4" rx="1.600" fill="none" stroke="#fff" stroke-width="1"/></svg></div>
<div class="rb" style="top:198px"><svg viewBox="0 0 32 32"><path d="M5.700 4.100h21a1.600 1.600 0 0 1 1.600 1.600v3.100H4.100V5.700A1.600 1.600 0 0 1 5.700 4.100z" fill="#fff"/><rect x="4.600" y="11.900" width="23.200" height="8.600" rx=".6" fill="none" stroke="#fff" stroke-width="1"/><path d="M4.600 23.900h23.200v2.300a1.600 1.600 0 0 1-1.600 1.600H6.200a1.600 1.600 0 0 1-1.600-1.600z" fill="none" stroke="#fff" stroke-width="1"/></svg></div>
<div class="rb" style="top:244px"><svg viewBox="0 0 32 32"><path d="M4.600 8.500V6.200a1.600 1.600 0 0 1 1.600-1.600h20a1.600 1.600 0 0 1 1.600 1.600v2.300z" fill="none" stroke="#fff" stroke-width="1"/><rect x="4.600" y="11.900" width="23.200" height="8.600" rx=".6" fill="none" stroke="#fff" stroke-width="1"/><path d="M4.100 23.400h24.200v3a1.600 1.600 0 0 1-1.600 1.600h-21a1.600 1.600 0 0 1-1.600-1.600z" fill="#fff"/></svg></div>
<div class="rb" style="top:290px"><svg viewBox="0 0 32 32"><rect x="4.600" y="4.600" width="23.200" height="8.800" fill="none" stroke="#fff" stroke-width="1"/><rect x="4.600" y="18.600" width="23.200" height="9" fill="none" stroke="#fff" stroke-width="1"/><path d="M10 6.800L7.100 9l2.900 2.200M13.400 6.800L16.300 9l-2.900 2.200" fill="none" stroke="#fff" stroke-width="1.100"/></svg></div>
<div class="rb" style="top:336px"><svg viewBox="0 0 32 32"><path d="M7.700 26.800L16.200 6.600" fill="none" stroke="#fff" stroke-width="1.100"/><path d="M16.200 6.600l5.800 14.200" fill="none" stroke="#fff" stroke-width="1.100" stroke-dasharray="4 1.500"/><path d="M11.800 19.200h8" fill="none" stroke="#fff" stroke-width="1.100" stroke-dasharray="3.500 1.400"/><path d="M24.700 20.200v9M20.200 24.700h9" stroke="#fff" stroke-width="1.100"/></svg></div>
<div class="rb" style="top:382px"><svg viewBox="0 0 32 32"><path d="M4.100 28L22.800 9.300" fill="none" stroke="#fff" stroke-width="1.100" stroke-dasharray="4.500 1.700"/><path d="M24.700 3v9M20.200 7.500h9" stroke="#fff" stroke-width="1.100"/></svg></div>
<div class="rb" style="top:428px"><svg viewBox="0 0 32 32"><path d="M10.800 7.500H7.700v17.200h17.200v-2.200" fill="none" stroke="#fff" stroke-width="1.100"/><path d="M13.200 7.500h2.800M18 7.500h2M24.900 14.200v2.800M24.900 19v2" fill="none" stroke="#fff" stroke-width="1.100"/><path d="M24.900 3v9M20.400 7.500h9" stroke="#fff" stroke-width="1.100"/></svg></div>
<div class="rb" style="top:474px"><svg viewBox="0 0 32 32"><rect x="5.400" y="4.900" width="22" height="22.100" rx="2" fill="none" stroke="#fff" stroke-width="1"/><path d="M5.400 18.800l5.400-4.100 5.100 5.100 6.200-6.600 5.300 4.100" fill="none" stroke="#fff" stroke-width="1.100" stroke-linejoin="round"/><circle cx="19.200" cy="10.100" r="1.800" fill="none" stroke="#fff" stroke-width="1"/></svg></div>
<div class="rb" style="top:520px"><svg viewBox="0 0 32 32"><path d="M8.100 4.100h11.400L26 10.500v15.900a1.600 1.600 0 0 1-1.600 1.600H8.100a1.600 1.600 0 0 1-1.600-1.600V5.700a1.600 1.600 0 0 1 1.600-1.600z" fill="none" stroke="#fff" stroke-width="1" stroke-linejoin="round"/><path d="M19.500 4.100v4.800a1.600 1.600 0 0 0 1.600 1.600H26z" fill="#fff" stroke="#fff" stroke-width="1" stroke-linejoin="round"/><path d="M14.500 16.300l-1.500 8M19.300 16.300l-1.500 8M11.300 18.800h9.600M10.800 21.800h9.600" fill="none" stroke="#fff" stroke-width="1.100"/></svg></div>
<div class="rb" style="top:566px"><svg viewBox="0 0 32 32"><rect x="3.600" y="5.200" width="23.800" height="17.700" rx="1.200" fill="none" stroke="#fff" stroke-width="1"/><path d="M8 3.200v3.800M22.900 3.200v3.800" stroke="#fff" stroke-width="1"/><path d="M11.300 9.800h3M16.400 9.800h3M21.300 9.800h3M6.500 12.700h3M11.300 12.700h3M16.400 12.700h3M21.300 12.700h3M6.500 15.700h3M11.300 15.700h3M16.400 15.700h3M6.500 18.800h3M11.300 18.800h3" stroke="#fff" stroke-width="1.100"/><circle cx="23.400" cy="22.900" r="6.700" fill="#0b6a9c" stroke="#fff" stroke-width="1.100"/><path d="M20.200 22.900l2.300 2.400 4.200-4.600" fill="none" stroke="#fff" stroke-width="1.200"/></svg></div>
<!-- status bar -->
<div class="a" style="left:0;top:844.500px;width:1440px;height:2px;background:#b2b2b2"></div>
<div class="a" style="left:1396px;top:844.500px;width:44px;height:1.500px;background:#c4c4c4"></div>
<div class="a" style="left:0;top:846.500px;width:1440px;height:29.500px;background:linear-gradient(180deg,#e9e9e9 0,#e2e2e2 8%,#d9d9d9 35%,#c6c6c6 75%,#b4b4b4 100%)"></div>
<div class="t" id="st1" style="left:1px;top:853.800px;font-size:11.400px;color:#111;letter-spacing:.26px">1 elemento selezionato (Label 'indirizzo')</div>
<div class="t" id="st2" style="left:457.500px;top:853.800px;font-size:11.400px;color:#111;letter-spacing:.26px">Da (8.78, 3.45) a (18.49, 4.20) - (9.71, 0.75) cm</div>
<div class="t" id="st3" style="left:1276.500px;top:853.800px;font-size:11.400px;color:#111;letter-spacing:.26px">Zoom:</div>
<div class="a" style="left:1317px;top:851px;width:75px;height:20px;border-radius:5px;background:#fff;box-shadow:0 0 0 .5px rgba(0,0,0,.1),0 .5px 2px rgba(0,0,0,.3)"></div>
<div class="t" id="st4" style="left:1319.200px;top:852.800px;font-size:12px;color:#111;letter-spacing:.2px">85.0%</div>
<svg class="a" style="left:1374px;top:853px;width:16px;height:16px" viewBox="0 0 16 16"><defs><linearGradient id="bg1" x1="0" y1="0" x2="0" y2="1"><stop offset="0" stop-color="#3d91fb"/><stop offset="1" stop-color="#0f6ef4"/></linearGradient></defs><rect width="16" height="16" rx="4" fill="url(#bg1)"/><path d="M4.800 6.800L8 9.800l3.200-3" fill="none" stroke="#fff" stroke-width="1.600" stroke-linecap="round" stroke-linejoin="round"/></svg>
<svg class="a" style="left:1400.500px;top:852.700px;width:16.400px;height:16.400px" viewBox="0 0 17 17"><rect x="3.900" y=".9" width="12.200" height="12.200" rx="1.500" fill="#c9d5e4" stroke="#1d6fa5" stroke-width="1.200"/><rect x=".8" y="8.900" width="7.300" height="7.300" rx="1" fill="#d6d2cf" stroke="#1d6fa5" stroke-width="1.200"/><path d="M8.900 7.900l4.300-4.100M9.900 3.600h3.500v3.500" fill="none" stroke="#1d6fa5" stroke-width="1.300"/></svg>
<svg class="a" style="left:1420.700px;top:852.700px;width:16.400px;height:16.400px" viewBox="0 0 17 17"><rect x="3.900" y=".9" width="12.200" height="12.200" rx="1.500" fill="#d6d2cf" stroke="#1d6fa5" stroke-width="1.200"/><rect x=".8" y="8.900" width="7.300" height="7.300" rx="1" fill="#c9d5e4" stroke="#1d6fa5" stroke-width="1.200"/><path d="M13.200 3.700L9 7.800M12.400 8.100H8.900V4.600" fill="none" stroke="#1d6fa5" stroke-width="1.300"/></svg>
</div>
</body>
</html>
